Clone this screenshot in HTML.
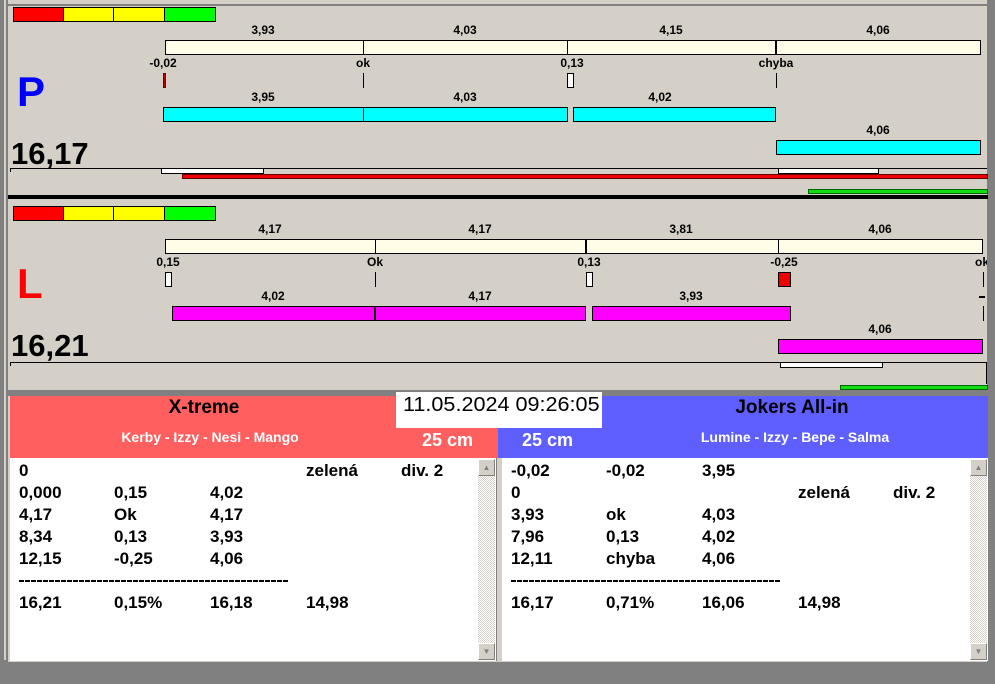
<!DOCTYPE html>
<html><head><meta charset="utf-8"><style>
*{margin:0;padding:0;box-sizing:border-box}
body{width:995px;height:684px;background:#d4d0c8;position:relative;overflow:hidden;font-family:"Liberation Sans",Arial,sans-serif}
.a{position:absolute}
.t{position:absolute;font-weight:bold;font-size:12px;color:#000;transform:translateX(-50%);white-space:nowrap;line-height:12px}
.b{position:absolute;border:1px solid #000}
.row{position:absolute;font-weight:bold;font-size:17px;line-height:22px;white-space:nowrap}
.row span{position:absolute}
.sb{position:absolute;width:17px;background:repeating-conic-gradient(#d4d0c8 0 25%,#fff 0 50%) 0 0/2px 2px}
.ar{position:absolute;left:0;width:17px;height:17px;background:#d4d0c8;border:1px solid;border-color:#fff #808080 #808080 #fff;font-size:8px;color:#808080;text-align:center;line-height:15px}
.dash{position:absolute;height:2px;background:repeating-linear-gradient(90deg,#000 0 5px,transparent 5px 6px)}
</style></head><body>
<div class="a" style="left:0;top:0;width:8px;height:684px;background:#808080"></div>
<div class="a" style="left:4px;top:0;width:2px;height:660px;background:#d4d0c8"></div>
<div class="a" style="left:987px;top:0;width:8px;height:684px;background:#808080"></div>
<div class="a" style="left:0;top:662px;width:995px;height:22px;background:#808080"></div>
<div class="a" style="left:8px;top:4px;width:980px;height:2px;background:#808080"></div>

<div class="a" style="left:13px;top:7px;width:51px;height:15px;background:#f00;border:1px solid #000"></div>
<div class="a" style="left:63px;top:7px;width:51px;height:15px;background:#ff0;border:1px solid #000"></div>
<div class="a" style="left:113px;top:7px;width:52px;height:15px;background:#ff0;border:1px solid #000"></div>
<div class="a" style="left:164px;top:7px;width:52px;height:15px;background:#0f0;border:1px solid #000"></div>
<div class="t" style="left:263px;top:24px">3,93</div><div class="t" style="left:465px;top:24px">4,03</div><div class="t" style="left:671px;top:24px">4,15</div><div class="t" style="left:878px;top:24px">4,06</div>
<div class="b" style="left:165px;top:40px;width:816px;height:15px;background:#fffde8"></div>
<div class="a" style="left:363px;top:40px;width:1px;height:15px;background:#000"></div>
<div class="a" style="left:567px;top:40px;width:1px;height:15px;background:#000"></div>
<div class="a" style="left:775px;top:40px;width:2px;height:15px;background:#000"></div>
<div class="t" style="left:163px;top:57px">-0,02</div><div class="t" style="left:363px;top:57px">ok</div><div class="t" style="left:572px;top:57px">0,13</div><div class="t" style="left:776px;top:57px">chyba</div>
<div class="a" style="left:163px;top:73px;width:3px;height:15px;background:#c00;border:1px solid #600"></div>
<div class="a" style="left:363px;top:73px;width:1px;height:15px;background:#000"></div>
<div class="b" style="left:567px;top:73px;width:7px;height:15px;background:#fff"></div>
<div class="a" style="left:776px;top:73px;width:1px;height:15px;background:#000"></div>
<div class="t" style="left:263px;top:91px">3,95</div><div class="t" style="left:465px;top:91px">4,03</div><div class="t" style="left:660px;top:91px">4,02</div>
<div class="b" style="left:163px;top:107px;width:405px;height:15px;background:#0ff"></div>
<div class="a" style="left:363px;top:107px;width:1px;height:15px;background:#000"></div>
<div class="b" style="left:573px;top:107px;width:203px;height:15px;background:#0ff"></div>
<div class="t" style="left:878px;top:124px">4,06</div>
<div class="b" style="left:776px;top:140px;width:205px;height:15px;background:#0ff"></div>
<div class="a" style="left:17px;top:70px;font-size:42px;font-weight:bold;color:#00f;line-height:44px">P</div>
<div class="a" style="left:11px;top:137px;font-size:31px;font-weight:bold;line-height:34px">16,17</div>
<div class="a" style="left:10px;top:168px;width:977px;height:1px;background:#000"></div>
<div class="a" style="left:10px;top:168px;width:1px;height:4px;background:#000"></div>
<div class="b" style="left:161px;top:168px;width:103px;height:6px;background:#fff"></div>
<div class="b" style="left:778px;top:168px;width:101px;height:6px;background:#fff"></div>
<div class="b" style="left:182px;top:174px;width:806px;height:5px;background:#e00;border-color:#600"></div>
<div class="b" style="left:808px;top:189px;width:180px;height:5px;background:#1d1;border-color:#060"></div>
<div class="a" style="left:8px;top:195px;width:980px;height:4px;background:#000"></div>

<div class="a" style="left:13px;top:206px;width:51px;height:15px;background:#f00;border:1px solid #000"></div>
<div class="a" style="left:63px;top:206px;width:51px;height:15px;background:#ff0;border:1px solid #000"></div>
<div class="a" style="left:113px;top:206px;width:52px;height:15px;background:#ff0;border:1px solid #000"></div>
<div class="a" style="left:164px;top:206px;width:52px;height:15px;background:#0f0;border:1px solid #000"></div>
<div class="t" style="left:270px;top:223px">4,17</div><div class="t" style="left:480px;top:223px">4,17</div><div class="t" style="left:681px;top:223px">3,81</div><div class="t" style="left:880px;top:223px">4,06</div>
<div class="b" style="left:165px;top:239px;width:818px;height:15px;background:#fffde8"></div>
<div class="a" style="left:375px;top:239px;width:1px;height:15px;background:#000"></div>
<div class="a" style="left:585px;top:239px;width:2px;height:15px;background:#000"></div>
<div class="a" style="left:778px;top:239px;width:1px;height:15px;background:#000"></div>
<div class="t" style="left:168px;top:256px">0,15</div><div class="t" style="left:375px;top:256px">Ok</div><div class="t" style="left:589px;top:256px">0,13</div><div class="t" style="left:784px;top:256px">-0,25</div>
<div class="a" style="left:975px;top:256px;font-size:12px;font-weight:bold;width:12px;overflow:hidden;line-height:12px">ok</div>
<div class="b" style="left:165px;top:272px;width:7px;height:15px;background:#fff"></div>
<div class="a" style="left:375px;top:272px;width:1px;height:15px;background:#000"></div>
<div class="b" style="left:586px;top:272px;width:7px;height:15px;background:#fff"></div>
<div class="b" style="left:778px;top:272px;width:13px;height:15px;background:#e00"></div>
<div class="a" style="left:983px;top:272px;width:1px;height:15px;background:#000"></div>
<div class="t" style="left:273px;top:290px">4,02</div><div class="t" style="left:480px;top:290px">4,17</div><div class="t" style="left:691px;top:290px">3,93</div>
<div class="a" style="left:979px;top:296px;width:6px;height:2px;background:#000"></div>
<div class="a" style="left:983px;top:306px;width:1px;height:15px;background:#000"></div>
<div class="b" style="left:172px;top:306px;width:414px;height:15px;background:#f0f"></div>
<div class="a" style="left:374px;top:306px;width:2px;height:15px;background:#000"></div>
<div class="b" style="left:592px;top:306px;width:199px;height:15px;background:#f0f"></div>
<div class="t" style="left:880px;top:323px">4,06</div>
<div class="b" style="left:778px;top:339px;width:205px;height:15px;background:#f0f"></div>
<div class="a" style="left:17px;top:262px;font-size:42px;font-weight:bold;color:#f00;line-height:44px">L</div>
<div class="a" style="left:11px;top:329px;font-size:31px;font-weight:bold;line-height:34px">16,21</div>
<div class="a" style="left:10px;top:362px;width:977px;height:1px;background:#000"></div>
<div class="a" style="left:10px;top:362px;width:1px;height:4px;background:#000"></div>
<div class="b" style="left:780px;top:362px;width:103px;height:6px;background:#fff"></div>
<div class="a" style="left:986px;top:362px;width:1px;height:22px;background:#000"></div>
<div class="b" style="left:840px;top:385px;width:148px;height:5px;background:#1d1;border-color:#060"></div>
<div class="a" style="left:8px;top:390px;width:980px;height:6px;background:#808080"></div>

<div class="a" style="left:10px;top:396px;width:488px;height:62px;background:#ff5f5f"></div>
<div class="a" style="left:498px;top:396px;width:490px;height:62px;background:#5f5fff"></div>
<div class="a" style="left:396px;top:392px;width:206px;height:36px;background:#fff"></div>
<div class="a" style="left:403px;top:394px;font-size:20px;line-height:22px;transform:scaleX(1.08);transform-origin:0 0;white-space:nowrap">11.05.2024 09:26:05</div>
<div class="a" style="left:10px;top:397px;width:388px;text-align:center;font-size:19px;font-weight:bold;line-height:22px">X-treme</div>
<div class="a" style="left:10px;top:428px;width:400px;text-align:center;font-size:14px;font-weight:bold;color:#fff;line-height:18px">Kerby - Izzy - Nesi - Mango</div>
<div class="a" style="left:422px;top:429px;font-size:18px;font-weight:bold;color:#fff;line-height:22px">25 cm</div>
<div class="a" style="left:522px;top:429px;font-size:18px;font-weight:bold;color:#fff;line-height:22px">25 cm</div>
<div class="a" style="left:602px;top:397px;width:380px;text-align:center;font-size:19px;font-weight:bold;line-height:22px">Jokers All-in</div>
<div class="a" style="left:600px;top:428px;width:390px;text-align:center;font-size:14px;font-weight:bold;color:#fff;line-height:18px">Lumine - Izzy - Bepe - Salma</div>

<div class="a" style="left:10px;top:458px;width:487px;height:203px;background:#fff;border-right:1px solid #808080"></div>
<div class="sb" style="left:478px;top:459px;height:201px"><div class="ar" style="top:0">▲</div><div class="ar" style="bottom:0">▼</div></div>
<div class="a" style="left:497px;top:458px;width:5px;height:203px;background:#d4d0c8"></div>
<div class="a" style="left:502px;top:458px;width:486px;height:203px;background:#fff"></div>
<div class="sb" style="left:970px;top:459px;height:201px"><div class="ar" style="top:0">▲</div><div class="ar" style="bottom:0">▼</div></div>

<div class="row" style="left:19px;top:460px"><span style="left:0">0</span><span style="left:287px">zelená</span><span style="left:382px">div. 2</span></div>
<div class="row" style="left:19px;top:482px"><span style="left:0">0,000</span><span style="left:95px">0,15</span><span style="left:191px">4,02</span></div>
<div class="row" style="left:19px;top:504px"><span style="left:0">4,17</span><span style="left:95px">Ok</span><span style="left:191px">4,17</span></div>
<div class="row" style="left:19px;top:526px"><span style="left:0">8,34</span><span style="left:95px">0,13</span><span style="left:191px">3,93</span></div>
<div class="row" style="left:19px;top:548px"><span style="left:0">12,15</span><span style="left:95px">-0,25</span><span style="left:191px">4,06</span></div>
<div class="dash" style="left:19px;top:580px;width:269px"></div>
<div class="row" style="left:19px;top:592px"><span style="left:0">16,21</span><span style="left:95px">0,15%</span><span style="left:191px">16,18</span><span style="left:287px">14,98</span></div>

<div class="row" style="left:511px;top:460px"><span style="left:0">-0,02</span><span style="left:95px">-0,02</span><span style="left:191px">3,95</span></div>
<div class="row" style="left:511px;top:482px"><span style="left:0">0</span><span style="left:287px">zelená</span><span style="left:382px">div. 2</span></div>
<div class="row" style="left:511px;top:504px"><span style="left:0">3,93</span><span style="left:95px">ok</span><span style="left:191px">4,03</span></div>
<div class="row" style="left:511px;top:526px"><span style="left:0">7,96</span><span style="left:95px">0,13</span><span style="left:191px">4,02</span></div>
<div class="row" style="left:511px;top:548px"><span style="left:0">12,11</span><span style="left:95px">chyba</span><span style="left:191px">4,06</span></div>
<div class="dash" style="left:511px;top:580px;width:269px"></div>
<div class="row" style="left:511px;top:592px"><span style="left:0">16,17</span><span style="left:95px">0,71%</span><span style="left:191px">16,06</span><span style="left:287px">14,98</span></div>
</body></html>
